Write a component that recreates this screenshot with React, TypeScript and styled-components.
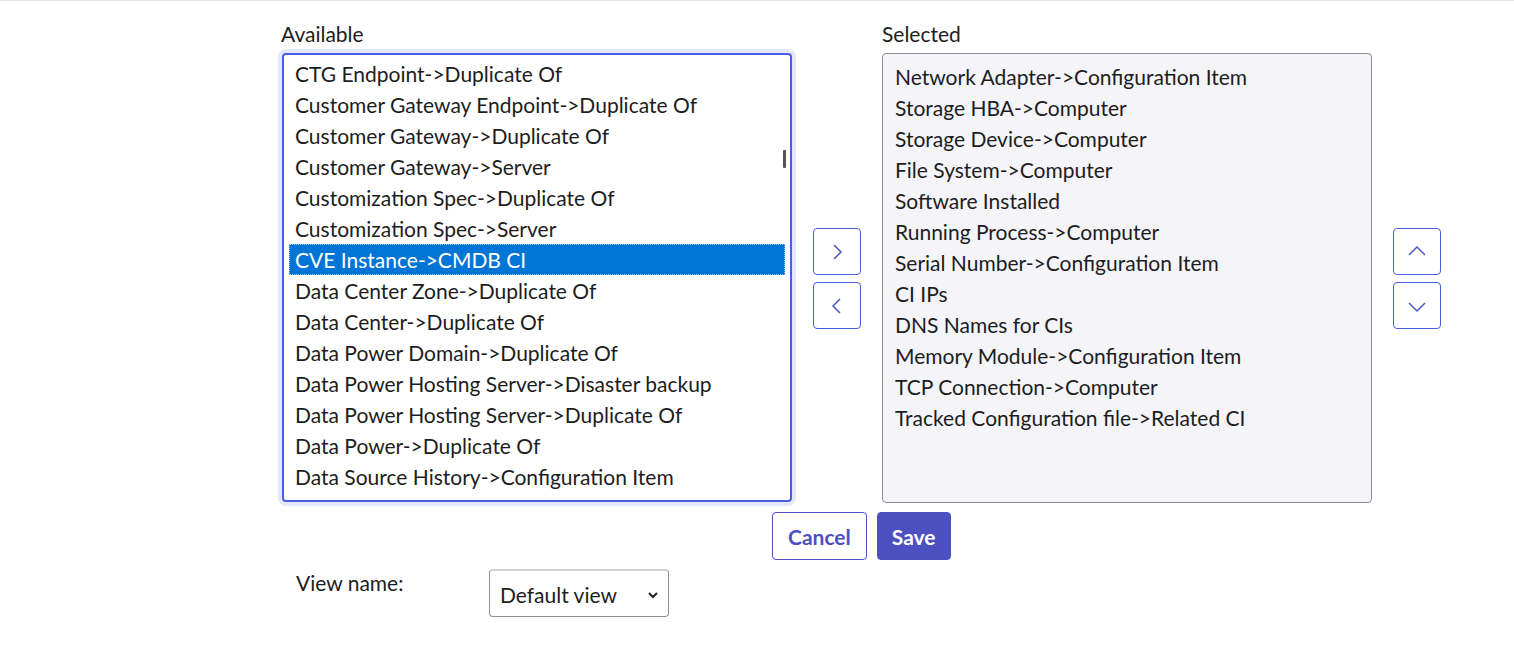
import React from "react";
import styled, { createGlobalStyle } from "styled-components";

const Global = createGlobalStyle`
  html, body { margin: 0; background: #fff; font-family: Lato, "Noto Sans", sans-serif; color: #1d1d1d; }
`;

const Page = styled.div`
  padding: 20px 0 0 278px;
  width: 1514px; height: 649px; box-sizing: border-box;
  border-top: 1px solid #e6e6e6;
`;
const Row = styled.div`display: flex; align-items: flex-start;`;
const Column = styled.div<{ w: number }>`display: flex; flex-direction: column; width: ${p => p.w}px;`;
const Label = styled.div<{ pl: number }>`font-size: 21px; line-height: 26px; padding-left: ${p => p.pl}px; height: 28px;`;
const Ring = styled.div`
  border-radius: 8px; background: #e4e8fb; padding: 4px; position: relative;
`;
const ListBox = styled.div<{ selected?: boolean }>`
  box-sizing: border-box;
  height: ${p => (p.selected ? 450 : 449)}px;
  width: ${p => (p.selected ? 490 : 510)}px;
  border: ${p => (p.selected ? "1px solid #8e8e99" : "2px solid #4a5fe0")};
  border-radius: 4px;
  background: ${p => (p.selected ? "#f4f4f9" : "#fff")};
  padding: ${p => (p.selected ? "7px 6px" : "3px 5px")};
  overflow: hidden;
  position: relative;
`;
const Option = styled.div<{ active?: boolean }>`
  font-size: 21px; height: 31px; line-height: 31px; padding-left: 6px; white-space: nowrap;
  box-sizing: border-box;
  ${p => p.active ? "background:#0075d6;color:#fff;outline:1px dotted #9cc7ff;outline-offset:-1px;" : ""}
`;
const Scroll = styled.div`
  position: absolute; right: 4px; top: 95px; width: 3px; height: 18px; background: #555; border-radius: 1px;
`;
const ArrowCol = styled.div<{ ml: number }>`
  display: flex; flex-direction: column; gap: 7px; margin-left: ${p => p.ml}px; margin-top: 207px;
`;
const IconBtn = styled.button`
  width: 48px; height: 47px; box-sizing: border-box; border: 1px solid #4a5fe0; border-radius: 4px;
  background: #fff; display: flex; align-items: center; justify-content: center; padding: 0; color: #4a56c8;
`;
const Actions = styled.div`display: flex; gap: 10px; margin: 6px 0 0 494px;`;
const Btn = styled.button<{ primary?: boolean }>`
  height: 48px; padding: 0 ${p => (p.primary ? 14 : 15)}px; border-radius: 4px; font-family: inherit;
  font-size: 21px; font-weight: 700; box-sizing: border-box;
  border: 1px solid #4a50c0;
  background: ${p => (p.primary ? "#4d50c0" : "#fff")};
  color: ${p => (p.primary ? "#fff" : "#4a50c0")};
`;
const ViewRow = styled.div`display: flex; align-items: flex-start; margin: 9px 0 0 18px;`;
const ViewLabel = styled.div`font-size: 21px; width: 193px; padding-top: 1px;`;
const Select = styled.div`
  width: 180px; height: 48px; box-sizing: border-box; border: 1px solid #8e8e99; border-radius: 4px;
  display: flex; align-items: center; justify-content: space-between; padding: 2px 8px 0 10px;
  font-size: 21px; border-top: 2px solid #cfcfd4;
`;

const available = [
  "CTG Endpoint->Duplicate Of",
  "Customer Gateway Endpoint->Duplicate Of",
  "Customer Gateway->Duplicate Of",
  "Customer Gateway->Server",
  "Customization Spec->Duplicate Of",
  "Customization Spec->Server",
  "CVE Instance->CMDB CI",
  "Data Center Zone->Duplicate Of",
  "Data Center->Duplicate Of",
  "Data Power Domain->Duplicate Of",
  "Data Power Hosting Server->Disaster backup",
  "Data Power Hosting Server->Duplicate Of",
  "Data Power->Duplicate Of",
  "Data Source History->Configuration Item",
  "Database Catalog->Duplicate Of",
];
const selected = [
  "Network Adapter->Configuration Item",
  "Storage HBA->Computer",
  "Storage Device->Computer",
  "File System->Computer",
  "Software Installed",
  "Running Process->Computer",
  "Serial Number->Configuration Item",
  "CI IPs",
  "DNS Names for CIs",
  "Memory Module->Configuration Item",
  "TCP Connection->Computer",
  "Tracked Configuration file->Related CI",
];

const Chevron = ({ d }: { d: string }) => (
  <svg width="20" height="20" viewBox="0 0 20 20" fill="none" stroke="currentColor" strokeWidth="1.5">
    <path d={d} />
  </svg>
);

export default function App() {
  return (
    <Page>
      <Global />
      <Row>
        <Column w={518}>
          <Label pl={3}>Available</Label>
          <Ring>
            <ListBox>
              {available.map((t, i) => <Option key={t} active={i === 6}>{t}</Option>)}
              <Scroll />
            </ListBox>
          </Ring>
        </Column>
        <ArrowCol ml={17}>
          <IconBtn><Chevron d="M7 3l7 7-7 7" /></IconBtn>
          <IconBtn><Chevron d="M13 3l-7 7 7 7" /></IconBtn>
        </ArrowCol>
        <Column w={490} style={{ marginLeft: 21 }}>
          <Label pl={0}>Selected</Label>
          <div style={{ paddingTop: 4 }}>
            <ListBox selected>
              {selected.map(t => <Option key={t}>{t}</Option>)}
            </ListBox>
          </div>
        </Column>
        <ArrowCol ml={21}>
          <IconBtn><Chevron d="M2 13l8-8 8 8" /></IconBtn>
          <IconBtn><Chevron d="M2 7l8 8 8-8" /></IconBtn>
        </ArrowCol>
      </Row>
      <Actions>
        <Btn>Cancel</Btn>
        <Btn primary>Save</Btn>
      </Actions>
      <ViewRow>
        <ViewLabel>View name:</ViewLabel>
        <Select>
          <span>Default view</span>
          <svg width="14" height="14" viewBox="0 0 14 14" fill="none" stroke="#222" strokeWidth="2"><path d="M3 5l4 4 4-4" /></svg>
        </Select>
      </ViewRow>
    </Page>
  );
}
